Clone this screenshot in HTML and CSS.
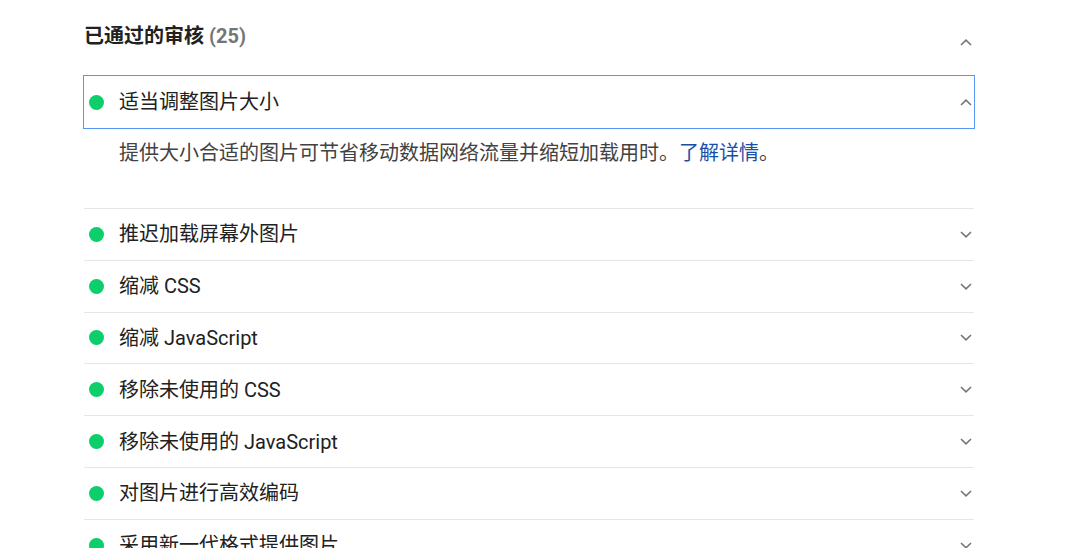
FILE: index.html
```html
<!DOCTYPE html>
<html lang="zh-CN">
<head>
    <meta charset="UTF-8">
    <meta name="viewport" content="width=device-width, initial-scale=1.0">
    <title>已通过的审核</title>
    <link rel="stylesheet" href="styles.css">
</head>
<body>

<div class="audit-group">
    <div class="group-header">
        <h2>已通过的审核 <span class="count">(25)</span></h2>
        <svg class="chevron" width="12" height="7" viewBox="0 0 12 7"><polyline points="1,6 6,1.2 11,6"/></svg>
    </div>

    <div class="audit open">
        <div class="audit-summary focused">
            <span class="dot"></span>
            <span class="audit-title">适当调整图片大小</span>
            <svg class="chevron" width="12" height="7" viewBox="0 0 12 7"><polyline points="1,6 6,1.2 11,6"/></svg>
        </div>
        <div class="audit-desc">提供大小合适的图片可节省移动数据网络流量并缩短加载用时。<a href="#">了解详情</a>。</div>
    </div>

    <div class="audit">
        <div class="audit-summary">
            <span class="dot"></span>
            <span class="audit-title">推迟加载屏幕外图片</span>
            <svg class="chevron" width="12" height="7" viewBox="0 0 12 7"><polyline points="1,1 6,5.8 11,1"/></svg>
        </div>
    </div>
    <div class="audit">
        <div class="audit-summary">
            <span class="dot"></span>
            <span class="audit-title">缩减 CSS</span>
            <svg class="chevron" width="12" height="7" viewBox="0 0 12 7"><polyline points="1,1 6,5.8 11,1"/></svg>
        </div>
    </div>
    <div class="audit">
        <div class="audit-summary">
            <span class="dot"></span>
            <span class="audit-title">缩减 JavaScript</span>
            <svg class="chevron" width="12" height="7" viewBox="0 0 12 7"><polyline points="1,1 6,5.8 11,1"/></svg>
        </div>
    </div>
    <div class="audit">
        <div class="audit-summary">
            <span class="dot"></span>
            <span class="audit-title">移除未使用的 CSS</span>
            <svg class="chevron" width="12" height="7" viewBox="0 0 12 7"><polyline points="1,1 6,5.8 11,1"/></svg>
        </div>
    </div>
    <div class="audit">
        <div class="audit-summary">
            <span class="dot"></span>
            <span class="audit-title">移除未使用的 JavaScript</span>
            <svg class="chevron" width="12" height="7" viewBox="0 0 12 7"><polyline points="1,1 6,5.8 11,1"/></svg>
        </div>
    </div>
    <div class="audit">
        <div class="audit-summary">
            <span class="dot"></span>
            <span class="audit-title">对图片进行高效编码</span>
            <svg class="chevron" width="12" height="7" viewBox="0 0 12 7"><polyline points="1,1 6,5.8 11,1"/></svg>
        </div>
    </div>
    <div class="audit">
        <div class="audit-summary">
            <span class="dot"></span>
            <span class="audit-title">采用新一代格式提供图片</span>
            <svg class="chevron" width="12" height="7" viewBox="0 0 12 7"><polyline points="1,1 6,5.8 11,1"/></svg>
        </div>
    </div>
</div>

</body>
</html>
```

FILE: styles.css
```css
html, body {
    margin: 0;
    padding: 0;
    background-color: #ffffff;
    height: 100%;
    overflow: hidden;
}
body {
    font-family: Roboto, "Noto Sans CJK SC", sans-serif;
    color: #212121;
}
.audit-group {
    width: 890px;
    margin-left: 84px;
}
.group-header {
    display: flex;
    justify-content: space-between;
    align-items: flex-start;
    padding-top: 24px;
    margin-bottom: 28px;
}
.group-header h2 {
    margin: 0;
    font-size: 20px;
    line-height: 24px;
    font-weight: 700;
    color: #212121;
}
.group-header h2 .count {
    color: #757575;
}
.group-header .chevron {
    margin-top: 15px;
    margin-right: 2px;
}
.chevron {
    flex: none;
}
.chevron polyline {
    fill: none;
    stroke: #757575;
    stroke-width: 1.6;
}
.audit {
    border-top: 1px solid #e6e6e6;
}
.audit.open {
    border-top: none;
}
.audit-summary {
    display: flex;
    align-items: center;
    height: 50.8px;
    padding-left: 5px;
    padding-right: 2px;
}
.audit-summary.focused {
    height: 52px;
    outline: 1px solid #5596f7;
    outline-offset: 0;
    box-sizing: border-box;
}
.dot {
    width: 15px;
    height: 15px;
    border-radius: 50%;
    background-color: #0cce6b;
    flex: none;
}
.audit-title {
    flex: 1;
    margin-left: 15px;
    font-size: 20px;
    font-weight: 400;
    line-height: 24px;
    color: #212121;
}
.audit-desc {
    padding: 13px 0 43px 35px;
    font-size: 20px;
    line-height: 24px;
    color: #424242;
}
.audit-desc a {
    color: #1a4fa8;
    text-decoration: none;
}
```
